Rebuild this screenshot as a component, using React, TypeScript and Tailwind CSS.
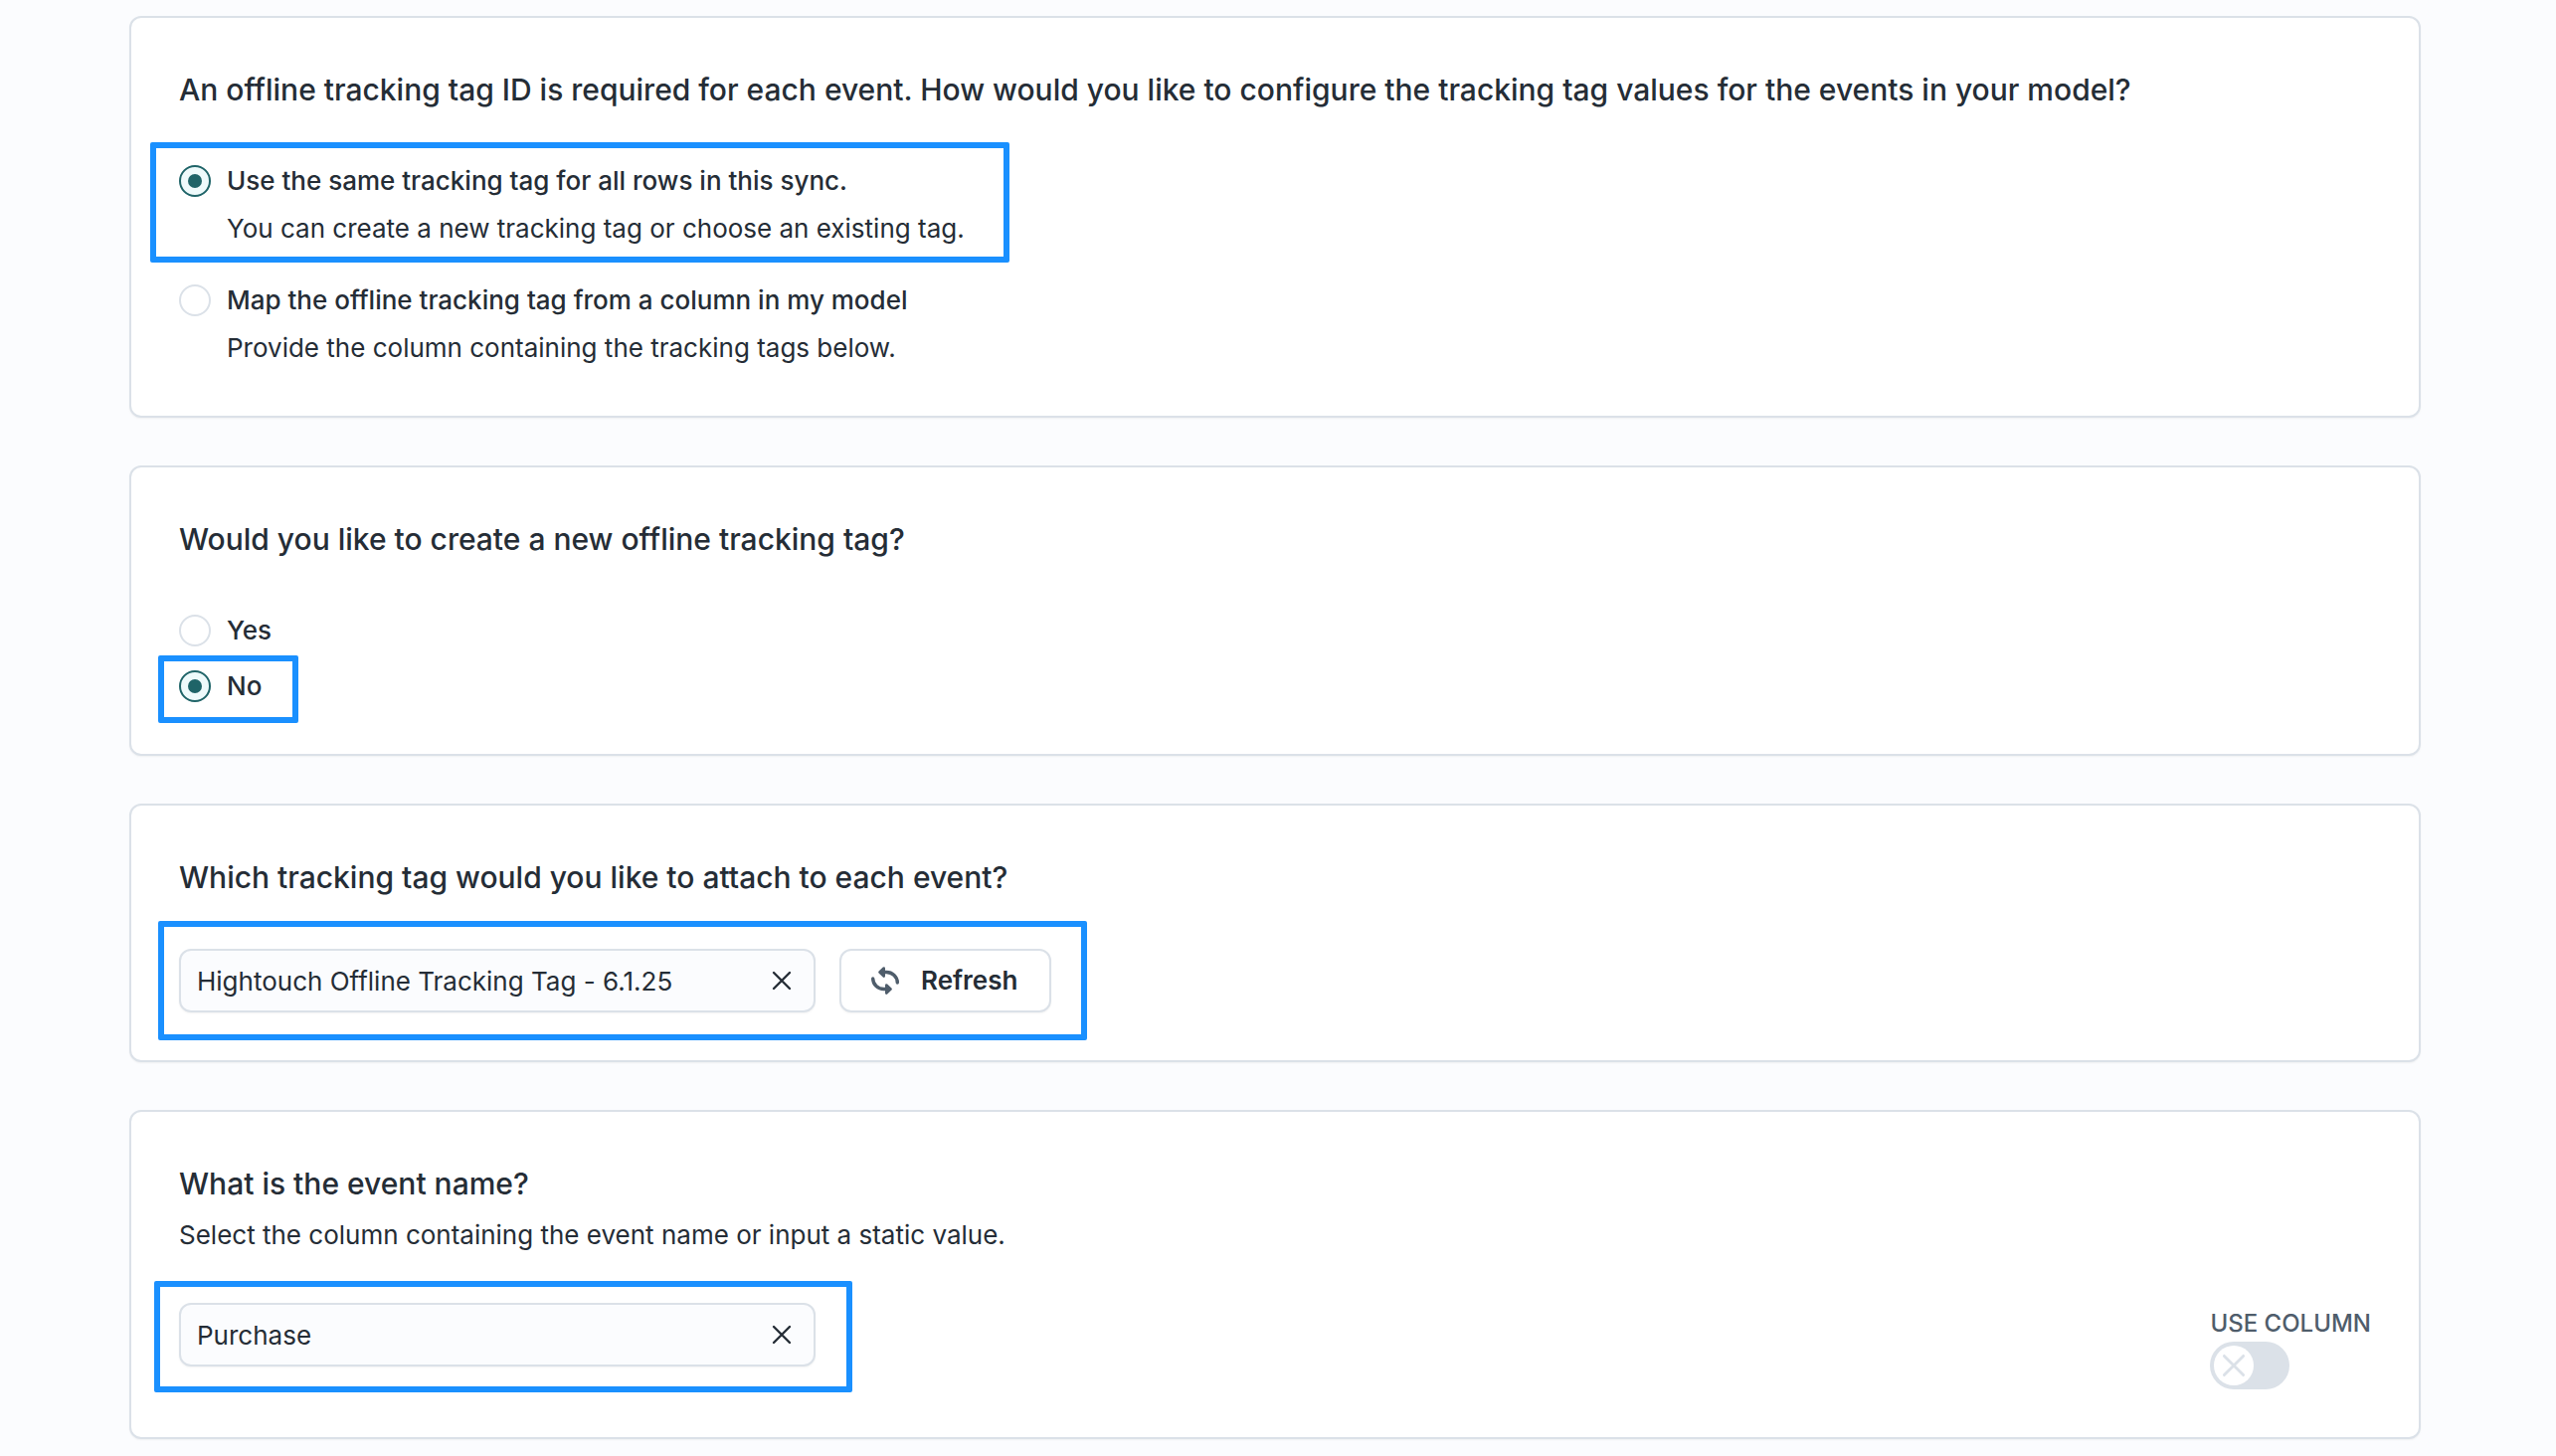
import { useState, type ReactNode } from "react";

function Highlight({ className }: { className: string }) {
  return (
    <span
      aria-hidden="true"
      className={`pointer-events-none absolute rounded-xs border-6 border-[#1a90ff] ${className}`}
    />
  );
}

function Card({ title, children }: { title: string; children: ReactNode }) {
  return (
    <section className="rounded-xl border-2 border-[#dbe1e8] bg-white p-12 shadow-xs">
      <h2 className="text-[30px]/[48px] font-medium">{title}</h2>
      {children}
    </section>
  );
}

type RadioOptionProps = {
  name: string;
  value: string;
  label: string;
  description?: string;
  selected: string;
  onSelect: (value: string) => void;
  highlight?: string;
};

function RadioOption({ name, value, label, description, selected, onSelect, highlight }: RadioOptionProps) {
  return (
    <label className="relative flex w-fit gap-4">
      <input
        type="radio"
        name={name}
        value={value}
        checked={selected === value}
        onChange={() => onSelect(value)}
        className="mt-1 grid size-8 shrink-0 appearance-none place-items-center rounded-full border-2 border-[#dbe1e8] bg-white before:size-3.5 before:rounded-full checked:border-[#1f6468] checked:bg-[#eefafb] checked:before:bg-[#1f6468]"
      />
      <span className="flex flex-col gap-2 text-[26px]/[40px]">
        <span className="font-medium">{label}</span>
        {description && <span>{description}</span>}
      </span>
      {highlight && <Highlight className={highlight} />}
    </label>
  );
}

function CrossIcon({ className }: { className: string }) {
  return (
    <svg viewBox="0 0 20 20" fill="none" stroke="currentColor" strokeWidth="2.4" strokeLinecap="round" className={className} aria-hidden="true">
      <path d="M2 2l16 16M18 2L2 18" />
    </svg>
  );
}

function RefreshIcon() {
  return (
    <svg viewBox="0 0 28 28" fill="none" stroke="currentColor" strokeWidth="3.4" strokeLinecap="round" strokeLinejoin="round" className="size-7 text-[#4f5d6b]" aria-hidden="true">
      <path d="M12 5.500H15A11 10.500 0 0 1 26.300 16" />
      <path d="M16 22.500H13A11 10.500 0 0 1 1.700 12" />
      <path d="M12.700 1.500L8.500 5.500L12.700 9.500Z" fill="currentColor" strokeWidth="2.6" />
      <path d="M15.300 18.500L19.500 22.500L15.300 26.500Z" fill="currentColor" strokeWidth="2.6" />
    </svg>
  );
}

function ClearableField({ label, initial }: { label: string; initial: string }) {
  const [value, setValue] = useState(initial);
  return (
    <div className="flex h-16 w-[640px] items-center rounded-xl border-2 border-[#dbe1e8] bg-[#fbfcfe] pr-3.5 pl-4 shadow-xs">
      <input
        type="text"
        aria-label={label}
        value={value}
        onChange={(e) => setValue(e.target.value)}
        className="min-w-0 flex-1 bg-transparent pt-0.5 text-[26px]/[40px] outline-none"
      />
      <button type="button" aria-label="Clear" onClick={() => setValue("")} className="grid size-9 place-items-center">
        <CrossIcon className="size-5" />
      </button>
    </div>
  );
}

export default function App() {
  const [mode, setMode] = useState("same");
  const [create, setCreate] = useState("no");
  const [useColumn, setUseColumn] = useState(false);

  return (
    <main className="flex min-h-screen flex-col gap-12 bg-[#fbfcfe] pt-4 pr-[136px] pb-4 pl-[130px] font-['Inter',sans-serif] text-[#252d36] [font-variant-ligatures:none]">
      <Card title="An offline tracking tag ID is required for each event. How would you like to configure the tracking tag values for the events in your model?">
        <div className="mt-12 flex flex-col gap-8">
          <RadioOption
            name="mode"
            value="same"
            label="Use the same tracking tag for all rows in this sync."
            description="You can create a new tracking tag or choose an existing tag."
            selected={mode}
            onSelect={setMode}
            highlight="-top-[19px] -bottom-[14px] -left-[29px] w-[864px]"
          />
          <RadioOption
            name="mode"
            value="column"
            label="Map the offline tracking tag from a column in my model"
            description="Provide the column containing the tracking tags below."
            selected={mode}
            onSelect={setMode}
          />
        </div>
      </Card>

      <Card title="Would you like to create a new offline tracking tag?">
        <div className="mt-12 flex flex-col gap-4">
          <RadioOption name="create" value="yes" label="Yes" selected={create} onSelect={setCreate} />
          <RadioOption
            name="create"
            value="no"
            label="No"
            selected={create}
            onSelect={setCreate}
            highlight="-top-[11px] -bottom-[17px] -left-[21px] w-[141px]"
          />
        </div>
      </Card>

      <Card title="Which tracking tag would you like to attach to each event?">
        <div className="relative mt-12 flex w-fit gap-6">
          <ClearableField label="Tracking tag" initial="Hightouch Offline Tracking Tag - 6.1.25" />
          <button
            type="button"
            className="flex h-16 items-center gap-[22px] rounded-xl border-2 border-[#dbe1e8] bg-white pr-8 pl-[30px] text-[26px]/[40px] font-semibold shadow-xs"
          >
            <RefreshIcon />
            Refresh
          </button>
          <Highlight className="-top-7 -bottom-7 -left-[21px] w-[934px]" />
        </div>
      </Card>

      <Card title="What is the event name?">
        <p className="mt-2 text-[26px]/[40px]">Select the column containing the event name or input a static value.</p>
        <div className="mt-12 flex items-start justify-between">
          <div className="relative">
            <ClearableField label="Event name" initial="Purchase" />
            <Highlight className="-top-[22px] -bottom-[26px] -left-[25px] w-[702px]" />
          </div>
          <label className="flex flex-col items-start pt-[3px] text-[24px]/[36px] font-medium text-[#4f5d6b]">
            USE COLUMN
            <input
              type="checkbox"
              role="switch"
              checked={useColumn}
              onChange={(e) => setUseColumn(e.target.checked)}
              className="peer sr-only"
            />
            <span className="flex h-12 w-20 rounded-full bg-[#dbe1e8] p-1 text-[#dbe1e8] peer-checked:justify-end peer-checked:bg-[#1f6468]">
              <span className="grid size-10 place-items-center rounded-full bg-white">
                <CrossIcon className="size-6" />
              </span>
            </span>
          </label>
        </div>
      </Card>
    </main>
  );
}
